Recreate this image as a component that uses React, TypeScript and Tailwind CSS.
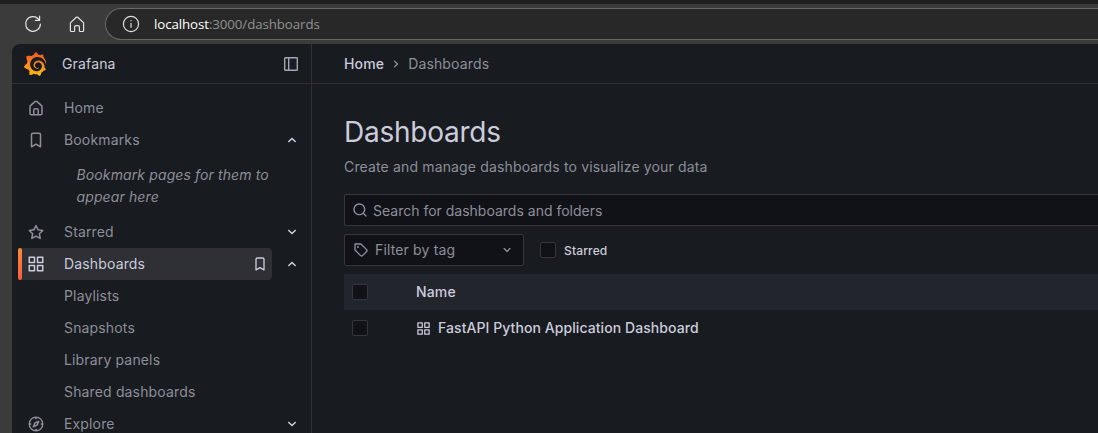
import type { ReactNode } from "react";
import { SiGrafana } from "react-icons/si";

const PATHS = {
  home: "M20,8h0L14,2.74a3,3,0,0,0-4,0L4,8a3,3,0,0,0-1,2.26V19a3,3,0,0,0,3,3H18a3,3,0,0,0,3-3V10.25A3,3,0,0,0,20,8ZM14,20H10V15a1,1,0,0,1,1-1h2a1,1,0,0,1,1,1Zm5-1a1,1,0,0,1-1,1H16V15a3,3,0,0,0-3-3H11a3,3,0,0,0-3,3v5H6a1,1,0,0,1-1-1V10.25a1,1,0,0,1,.34-.75l6-5.25a1,1,0,0,1,1.32,0l6,5.25a1,1,0,0,1,.34.75Z",
  bookmark:
    "M16,2H8A3,3,0,0,0,5,5V21a1,1,0,0,0,.5.87,1,1,0,0,0,1,0L12,18.69l5.5,3.18A1,1,0,0,0,18,22a1,1,0,0,0,.5-.13A1,1,0,0,0,19,21V5A3,3,0,0,0,16,2Zm1,17.27-4.5-2.6a1,1,0,0,0-1,0L7,19.27V5A1,1,0,0,1,8,4h8a1,1,0,0,1,1,1Z",
  star: "M22,9.67A1,1,0,0,0,21.14,9l-5.69-.83L12.9,3a1,1,0,0,0-1.8,0L8.55,8.16,2.86,9a1,1,0,0,0-.81.68,1,1,0,0,0,.25,1l4.13,4-1,5.68A1,1,0,0,0,6.9,21.44L12,18.77l5.1,2.67a.93.93,0,0,0,.46.12,1,1,0,0,0,.59-.19,1,1,0,0,0,.4-1l-1-5.68,4.13-4A1,1,0,0,0,22,9.67Zm-6.15,4a1,1,0,0,0-.29.88l.72,4.2-3.76-2a1.06,1.06,0,0,0-.94,0l-3.76,2,.72-4.2a1,1,0,0,0-.29-.88l-3-3,4.21-.61a1,1,0,0,0,.76-.55L12,5.7l1.88,3.82a1,1,0,0,0,.76.55l4.21.61Z",
  apps: "M10,13H3a1,1,0,0,0-1,1v7a1,1,0,0,0,1,1h7a1,1,0,0,0,1-1V14A1,1,0,0,0,10,13ZM9,20H4V15H9ZM21,2H14a1,1,0,0,0-1,1v7a1,1,0,0,0,1,1h7a1,1,0,0,0,1-1V3A1,1,0,0,0,21,2ZM20,9H15V4h5Zm1,4H14a1,1,0,0,0-1,1v7a1,1,0,0,0,1,1h7a1,1,0,0,0,1-1V14A1,1,0,0,0,21,13Zm-1,7H15V15h5ZM10,2H3A1,1,0,0,0,2,3v7a1,1,0,0,0,1,1h7a1,1,0,0,0,1-1V3A1,1,0,0,0,10,2ZM9,9H4V4H9Z",
  compass:
    "M12,2A10,10,0,1,0,22,12,10,10,0,0,0,12,2Zm1,17.93V19a1,1,0,0,0-2,0v.93A8,8,0,0,1,4.07,13H5a1,1,0,0,0,0-2H4.07A8,8,0,0,1,11,4.07V5a1,1,0,0,0,2,0V4.07A8,8,0,0,1,19.93,11H19a1,1,0,0,0,0,2h.93A8,8,0,0,1,13,19.93ZM15.14,7.55l-5,2.12a1,1,0,0,0-.52.52l-2.12,5a1,1,0,0,0,.21,1.1,1,1,0,0,0,.7.3.93.93,0,0,0,.4-.09l5-2.12a1,1,0,0,0,.52-.52l2.12-5a1,1,0,0,0-1.31-1.31Zm-2.49,5.1-2.28,1,1-2.28,2.28-1Z",
  down: "M17,9.17a1,1,0,0,0-1.41,0L12,12.71,8.46,9.17a1,1,0,0,0-1.41,0,1,1,0,0,0,0,1.42l4.24,4.24a1,1,0,0,0,1.42,0L17,10.59A1,1,0,0,0,17,9.17Z",
  up: "M17,13.41,12.71,9.17a1,1,0,0,0-1.42,0L7.05,13.41a1,1,0,0,0,0,1.42,1,1,0,0,0,1.41,0L12,11.29l3.54,3.54a1,1,0,0,0,.7.29,1,1,0,0,0,.71-.29A1,1,0,0,0,17,13.41Z",
  right:
    "M14.83,11.29,10.59,7.05a1,1,0,0,0-1.42,0,1,1,0,0,0,0,1.41L12.71,12,9.17,15.54a1,1,0,0,0,0,1.41,1,1,0,0,0,.71.29,1,1,0,0,0,.71-.29l4.24-4.24A1,1,0,0,0,14.83,11.29Z",
  search:
    "M21.71,20.29,18,16.61A9,9,0,1,0,16.61,18l3.68,3.68a1,1,0,0,0,1.42,0A1,1,0,0,0,21.71,20.29ZM11,18a7,7,0,1,1,7-7A7,7,0,0,1,11,18Z",
  tag: "M7.5,6A1.5,1.5,0,1,0,9,7.5,1.5,1.5,0,0,0,7.5,6Zm13.62,4.71L12.71,2.29A1,1,0,0,0,12,2H3A1,1,0,0,0,2,3v9a1,1,0,0,0,.29.71l8.42,8.41a3,3,0,0,0,4.24,0L21.12,15a3,3,0,0,0,0-4.24Zm-1.41,2.82h0l-6.18,6.17a1,1,0,0,1-1.41,0L4,11.59V4h7.59l8.12,8.12a1,1,0,0,1,.29.71A1,1,0,0,1,19.71,13.53Z",
};

type IconName = keyof typeof PATHS;

function Icon({ name, size = 16, className = "" }: { name: IconName; size?: number; className?: string }) {
  return (
    <svg viewBox="0 0 24 24" width={size} height={size} fill="currentColor" className={`shrink-0 ${className}`}>
      <path d={PATHS[name]} />
    </svg>
  );
}

function BrowserBar() {
  return (
    <div className="flex h-11 shrink-0 items-center border-t-4 border-[#1f1f1f] bg-[#3b3b3b] pl-6">
      <svg width="18" height="18" viewBox="0 0 18 18" fill="none" stroke="#e4e4e4" strokeWidth="1.2" strokeLinecap="round" strokeLinejoin="round" className="shrink-0">
        <path d="M16.4 9A7.4 7.4 0 1 1 14.2 3.7L15.6 5.1M15.6 1.2V5.4H11.4" />
      </svg>
      <svg width="16" height="17" viewBox="0 0 16 17" fill="none" stroke="#e4e4e4" strokeWidth="1.2" strokeLinejoin="round" className="ml-[27px] shrink-0">
        <path d="M1.4 7.3Q1.4 6.8 1.8 6.4L7.3 1.3Q8 .8 8.7 1.3L14.2 6.4Q14.6 6.8 14.6 7.3V14.6Q14.6 15.5 13.7 15.5H11.2Q10.4 15.5 10.4 14.7V11Q10.4 9.6 9 9.6H7Q5.6 9.6 5.6 11V14.7Q5.6 15.5 4.8 15.5H2.3Q1.4 15.5 1.4 14.6Z" />
      </svg>
      <div className="ml-5 flex h-8 flex-1 items-center rounded-l-full border border-r-0 border-[#696969] bg-[#282828] pl-4">
        <svg width="18" height="18" viewBox="0 0 18 18" fill="none" stroke="#dedede" strokeWidth="1.2" className="shrink-0">
          <circle cx="9" cy="9" r="7.6" />
          <path d="M9 8V12.8" />
          <circle cx="9" cy="5.8" r=".4" fill="#dedede" strokeWidth=".6" />
        </svg>
        <span className="ml-[14px] font-['Open_Sans',sans-serif] text-[13.3px] leading-5 tracking-[-0.09px] whitespace-nowrap text-[#929292]">
          <span className="text-white">localhost</span>:3000/dashboards
        </span>
      </div>
    </div>
  );
}

function NavItem({ icon, label, chevron, active }: { icon?: IconName; label: string; chevron?: "up" | "down"; active?: boolean }) {
  return (
    <div className="flex h-8 shrink-0 items-center">
      <div
        className={`relative flex h-8 w-[254px] items-center rounded-sm pl-[9px] ${active ? "bg-[#2e3035] text-[#ccccdc]" : "text-[#8d8e9a]"}`}
      >
        {active && <span className="absolute top-0 left-0 h-8 w-1 rounded-xs bg-linear-to-t from-[#f55f3e] to-[#ff8833]" />}
        <span className="flex w-[37px]">{icon && <Icon name={icon} size={18} />}</span>
        <span className="flex-1">{label}</span>
        {active && <Icon name="bookmark" className="mr-1" />}
      </div>
      {chevron && <Icon name={chevron} size={18} className="ml-[11px] text-[#ccccdc]" />}
    </div>
  );
}

function Sidebar() {
  return (
    <div className="flex w-[300px] shrink-0 flex-col border-r border-[#2e3035]">
      <div className="flex h-10 shrink-0 items-center border-b border-[#2e3035] pr-[13px] pl-[11px]">
        <svg width="0" height="0" className="absolute">
          <linearGradient id="flame" x1="0" y1="1" x2="0" y2="0">
            <stop offset="0" stopColor="#fcc10c" />
            <stop offset="0.3" stopColor="#fb9d1b" />
            <stop offset="1" stopColor="#f05529" />
          </linearGradient>
        </svg>
        <SiGrafana size={24} fill="url(#flame)" className="shrink-0" />
        <span className="ml-[15px] flex-1 text-[#ccccdc]">Grafana</span>
        <svg width="14" height="14" viewBox="0 0 14 14" fill="none" stroke="#a5a6b4" strokeWidth="1.4">
          <rect x=".7" y=".7" width="12.6" height="12.6" rx=".6" />
          <path d="M4.7 .7V13.3" />
        </svg>
      </div>
      <nav className="flex flex-col pt-2 pl-1.5">
        <NavItem icon="home" label="Home" />
        <NavItem icon="bookmark" label="Bookmarks" chevron="up" />
        <p className="my-2 ml-[58.5px] w-[210px] leading-[22px] tracking-[0.12px] text-[#8d8e9a] italic">
          Bookmark pages for them to appear here
        </p>
        <NavItem icon="star" label="Starred" chevron="down" />
        <NavItem icon="apps" label="Dashboards" chevron="up" active />
        <NavItem label="Playlists" />
        <NavItem label="Snapshots" />
        <NavItem label="Library panels" />
        <NavItem label="Shared dashboards" />
        <NavItem icon="compass" label="Explore" chevron="down" />
      </nav>
    </div>
  );
}

function Checkbox() {
  return <span className="size-4 shrink-0 rounded-xs border border-[#34363c] bg-[#111217]" />;
}

function Row({ header, children }: { header?: boolean; children: ReactNode }) {
  return (
    <div className={`flex h-9 items-center pl-2 font-medium text-[#ccccdc] ${header ? "bg-[#22252b]" : ""}`}>
      <Checkbox />
      <div className="ml-12 flex items-center">{children}</div>
    </div>
  );
}

function Main() {
  return (
    <div className="flex min-w-0 flex-1 flex-col">
      <div className="flex h-10 shrink-0 items-center border-b border-[#2e3035] pl-8">
        <span className="font-medium text-[#ccccdc]">Home</span>
        <Icon name="right" className="mx-1 text-[#8d8e9a]" />
        <span className="text-[#8d8e9a]">Dashboards</span>
      </div>
      <div className="flex flex-col pt-8 pl-8">
        <h1 className="text-[28px] leading-8 tracking-[-0.25px] text-[#ccccdc]">Dashboards</h1>
        <p className="mt-2 leading-[22px] text-[#8d8e9a]">Create and manage dashboards to visualize your data</p>
        <div className="mt-4 flex h-8 items-center rounded-l-xs border border-r-0 border-[#34363c] bg-[#111217] pl-[7px] text-[#8d8e9a]">
          <Icon name="search" />
          <span className="ml-[5px] pt-0.5 tracking-normal">Search for dashboards and folders</span>
        </div>
        <div className="mt-2 flex items-center">
          <div className="flex h-8 w-[180px] items-center rounded-xs border border-[#34363c] bg-[#111217] pr-2 pl-2 text-[#8d8e9a]">
            <Icon name="tag" />
            <span className="ml-1.5 flex-1">Filter by tag</span>
            <Icon name="down" />
          </div>
          <div className="ml-4 flex items-center">
            <Checkbox />
            <span className="ml-2 pt-0.5 text-xs font-medium text-[#ccccdc]">Starred</span>
          </div>
        </div>
        <div className="mt-2">
          <Row header>Name</Row>
          <Row>
            <Icon name="apps" size={15} className="mr-[7px]" />
            <span className="tracking-[0.07px]">FastAPI Python Application Dashboard</span>
          </Row>
        </div>
      </div>
    </div>
  );
}

export default function App() {
  return (
    <div className="flex h-[433px] w-[1098px] flex-col overflow-hidden bg-[#3b3b3b] font-['Inter',sans-serif] text-sm tracking-[0.15px]">
      <BrowserBar />
      <div className="ml-3 flex min-h-0 flex-1 overflow-hidden rounded-tl-lg bg-[#181b1f]">
        <Sidebar />
        <Main />
      </div>
    </div>
  );
}
